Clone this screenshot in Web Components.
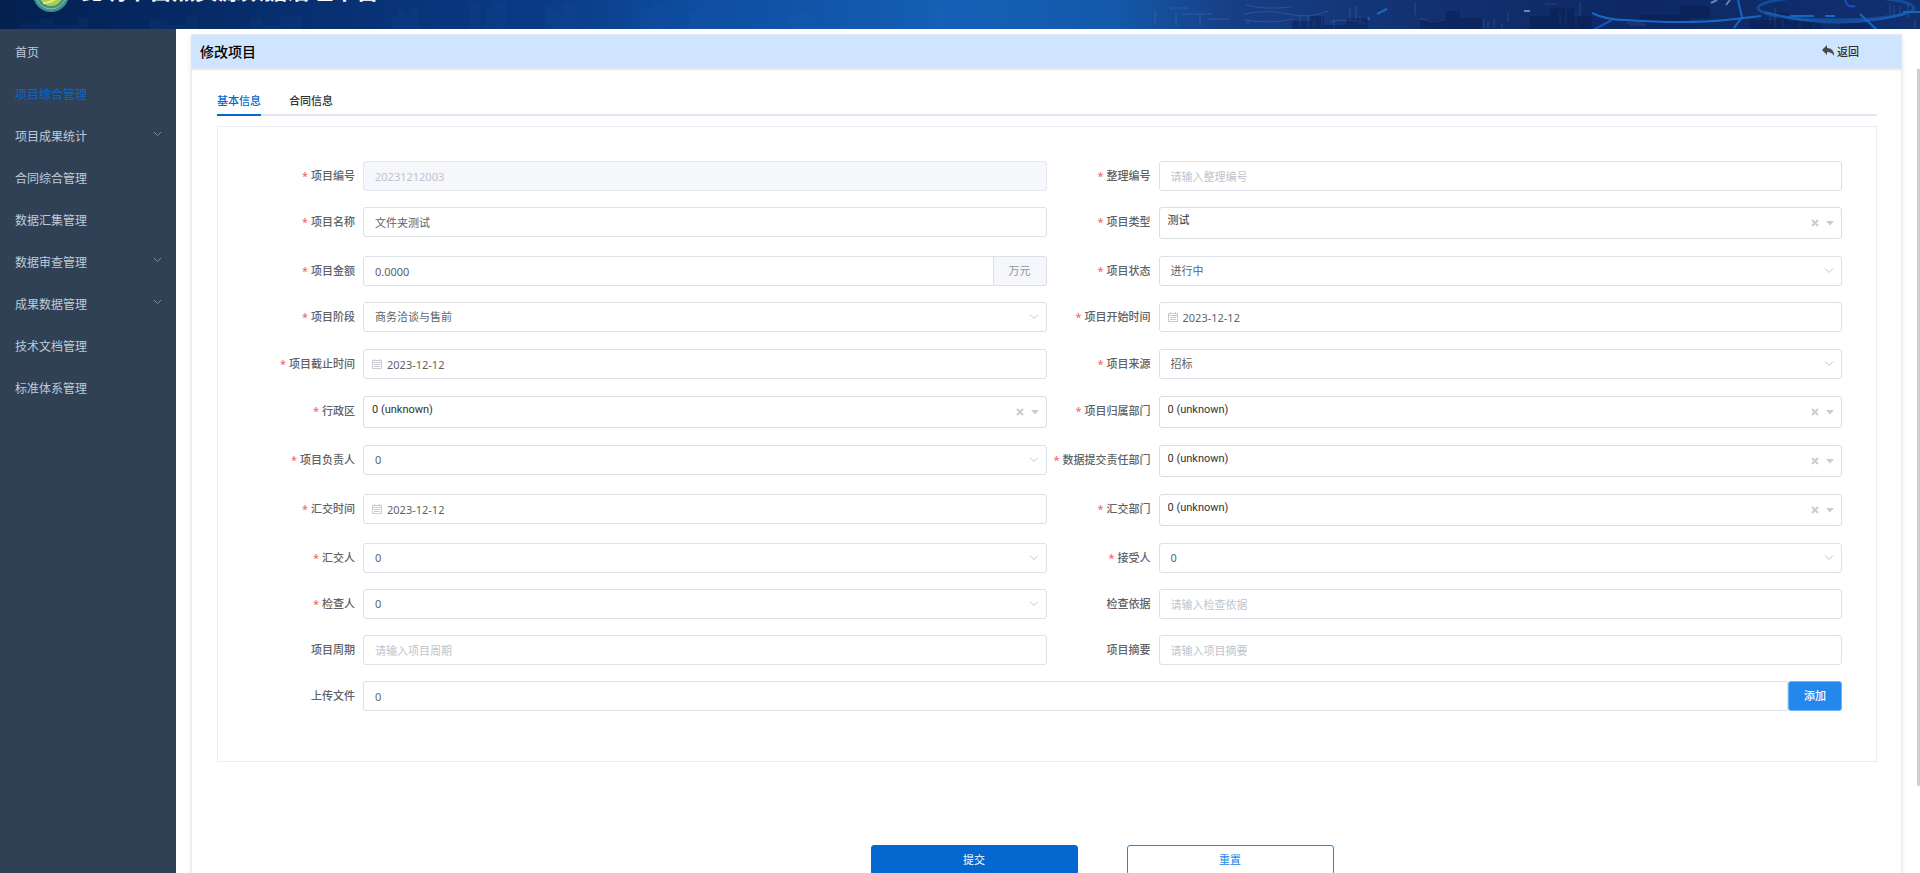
<!DOCTYPE html>
<html lang="zh-CN">
<head>
<meta charset="utf-8">
<meta name="viewport" content="width=device-width, initial-scale=1">
<title>修改项目</title>
<style>
  html, body { margin: 0; height: 100%; overflow: hidden; background: #fff; }
  body { font: 11px/16px "Noto Sans", "Noto Sans CJK SC", sans-serif; color: #303133; }
</style>
</head>
<body>
<app-shell>
  <app-banner slot="banner">昆明市自然资源数据治理平台</app-banner>
  <side-menu slot="menu">
    <menu-item>首页</menu-item>
    <menu-item active>项目综合管理</menu-item>
    <menu-item expandable>项目成果统计</menu-item>
    <menu-item>合同综合管理</menu-item>
    <menu-item>数据汇集管理</menu-item>
    <menu-item expandable>数据审查管理</menu-item>
    <menu-item expandable>成果数据管理</menu-item>
    <menu-item>技术文档管理</menu-item>
    <menu-item>标准体系管理</menu-item>
  </side-menu>
  <page-card heading="修改项目">
    <tab-bar tabs="基本信息,合同信息"></tab-bar>
    <form-panel>
      <form-field label="项目编号" required kind="text" value="20231212003" disabled></form-field>
      <form-field label="整理编号" required kind="text" placeholder="请输入整理编号"></form-field>
      <form-field label="项目名称" required kind="text" value="文件夹测试"></form-field>
      <form-field label="项目类型" required kind="tree" value="测试"></form-field>
      <form-field label="项目金额" required kind="text" value="0.0000" unit="万元"></form-field>
      <form-field label="项目状态" required kind="select" value="进行中"></form-field>
      <form-field label="项目阶段" required kind="select" value="商务洽谈与售前"></form-field>
      <form-field label="项目开始时间" required kind="date" value="2023-12-12"></form-field>
      <form-field label="项目截止时间" required kind="date" value="2023-12-12"></form-field>
      <form-field label="项目来源" required kind="select" value="招标"></form-field>
      <form-field label="行政区" required kind="tree" value="0 (unknown)"></form-field>
      <form-field label="项目归属部门" required kind="tree" value="0 (unknown)"></form-field>
      <form-field label="项目负责人" required kind="select" value="0"></form-field>
      <form-field label="数据提交责任部门" required kind="tree" value="0 (unknown)"></form-field>
      <form-field label="汇交时间" required kind="date" value="2023-12-12"></form-field>
      <form-field label="汇交部门" required kind="tree" value="0 (unknown)"></form-field>
      <form-field label="汇交人" required kind="select" value="0"></form-field>
      <form-field label="接受人" required kind="select" value="0"></form-field>
      <form-field label="检查人" required kind="select" value="0"></form-field>
      <form-field label="检查依据" kind="text" placeholder="请输入检查依据"></form-field>
      <form-field label="项目周期" kind="text" placeholder="请输入项目周期"></form-field>
      <form-field label="项目摘要" kind="text" placeholder="请输入项目摘要"></form-field>
      <form-field label="上传文件" kind="text" value="0" action="添加" wide></form-field>
    </form-panel>
    <form-actions></form-actions>
  </page-card>
</app-shell>

<script>
const define = (name, markup, setup) => {
  const template = document.createElement('template');
  template.innerHTML = markup;
  customElements.define(name, class extends HTMLElement {
    constructor() {
      super();
      this.attachShadow({ mode: 'open' }).append(template.content.cloneNode(true));
    }
    connectedCallback() {
      if (setup && !this.ready) { this.ready = true; setup(this, this.shadowRoot); }
    }
  });
};

define('app-shell', `
  <style>
    :host { display: flex; flex-direction: column; height: 100vh; overflow: hidden; }
    .body { position: relative; display: flex; flex: 1; min-height: 0; }
    main { flex: 1; min-width: 0; padding: 5px 18px 0 15px; overflow: hidden; }
    .thumb { position: absolute; right: 0; top: 40px; width: 3px; height: 85%; background: #cfcfcf; border-radius: 0 0 2px 2px; }
  </style>
  <slot name="banner"></slot>
  <div class="body">
    <slot name="menu"></slot>
    <main><slot></slot></main>
    <div class="thumb"></div>
  </div>`);

define('app-banner', `
  <style>
    :host { position: relative; display: flex; align-items: flex-end; flex: none; height: 29px; overflow: hidden;
      background: linear-gradient(90deg, #03204f 0, #062a66 10%, #0a3a85 28%, #0e4d9f 36%, #1560b6 50%, #1459aa 58%, #173f86 64%, #12306f 75%, #0d2864 85%, #11306f 100%); }
    .art { position: absolute; inset: 0; width: 100%; height: 100%; }
    .logo { position: relative; flex: none; width: 38px; height: 38px; margin: 0 0 16px 32px; }
    h1 { position: relative; margin: 0 0 23px 10px; font-size: 23px; line-height: 32px; font-weight: 700; color: #fff; white-space: nowrap; }
  </style>
  <svg class="art" viewBox="0 0 1920 29" preserveAspectRatio="none" aria-hidden="true">
    <g fill="#2a6bc0" opacity=".07">
      <path d="M392 29V16h6v-5h5v4h8V9h7v20zM470 29V3h10v26zM486 29V8h8V2h12v27zM545 29V6h10v7h8V3h13v26zM640 29V8h14v-4h12v25zM690 29V12h12V6h16v23zM790 29V16h10v-4h14v17zM930 29V8h8V3h6v26z"/>
      <path d="M20 29v-6h20v-4h14v6h24v-8h10v12zM150 29v-9h16v5h20v-8h12v12zM250 29V18h12v7h18v-9h22v13z"/>
    </g>
    <g fill="none" stroke="#8db6e8" stroke-width="1" opacity=".2">
      <path d="M1170 8h18m-6 6h30m-4 5h22M1246 5q20 5 45 2M1244 14q22-5 44 0t40-3M1244 20q26 4 50-1M1330 22q16-5 36 2M1420 18q12 6 24 2M1155 10v14M1176 12v14M1200 14v12M1248 21v3"/>
      <path d="M1300 15v12m8-12v14m6-10v8m8-12v12m12-8v10M1350 8v12m6-14v16m4-6v9M1415 3v12M1484 19v8m4-6v7m6-9v9m8-4v5M1508 13v9M1560 12v12m6-16v18m10-12v13m4-25v14M1545 4h12M1626 23h18M1630 25h16M1770 12v12m5-16v19m8-7v8M1800 20v8m14-4v4M1890 3v12m4-10v13M1900 6v8M1908 3v15M1915 20v8"/>
    </g>
    <g fill="#061844" opacity=".35">
      <path d="M1292 29v-8h18v-5h14v9h22v-7h22v11zM1420 29v-9h26v-9h14v7h22v11zM1530 29V16h20V8h24v8h18v13zM1640 15h40v-9h30v12h-20v5h-50zM1750 29v-9h28v-8h10v9h34v8zM1840 29v-6h30v6z"/>
    </g>
    <g fill="none" stroke="#1768c0" stroke-width="2">
      <path d="M1592 13q14 7 34 7 60 4 100 0l35-4M1738 0l4 17-8 11M1377 14l10-5M1368 17l1 3" />
      <path d="M1612 20l-19 10M1845 0q2 8 10 6" stroke="#1a4fbe"/>
      <path d="M1790 16h24m11 0h10M1860 14l17 16M1903 12h17"/>
      <ellipse cx="1836" cy="8" rx="78" ry="12" stroke="#1560b8" stroke-width="3" opacity=".6"/>
      <path d="M1765 12q70 20 140 2" stroke="#236fd0" opacity=".5"/>
    </g>
    <g fill="none" stroke="#c5dcf8" stroke-width="2" opacity=".5"><path d="M1711 3l6-3M1726 5l4-5M1524 11h6"/></g>
  </svg>
  <svg class="logo" viewBox="0 0 38 38" aria-hidden="true">
    <circle cx="19" cy="19" r="18" fill="#3f8f8d"/>
    <circle cx="19" cy="19" r="15" fill="none" stroke="#8cc6a8" stroke-width="1"/>
    <circle cx="19" cy="19" r="12" fill="#a9cf4d"/>
    <path d="M8 24q8 1 12-5t10-7M11 28q10 0 18-9" fill="none" stroke="#e6ee7b" stroke-width="2"/>
    <path d="M8 15q10 4 20-6" fill="none" stroke="#4ba05a" stroke-width="2"/>
  </svg>
  <h1><slot></slot></h1>`);

define('side-menu', `
  <style>
    :host { display: block; flex: none; width: 176px; background: #304156; }
    nav { display: flex; flex-direction: column; padding-top: 3px; }
  </style>
  <nav><slot></slot></nav>`);

define('menu-item', `
  <style>
    :host { display: block; --ink: #bfcbd9; }
    :host([active]) { --ink: #0468d0; }
    a { display: flex; align-items: center; justify-content: space-between; height: 42px; padding: 0 14px 0 15px; font-size: 12px; color: var(--ink); text-decoration: none; }
    svg { display: none; width: 9px; height: 12px; margin-bottom: 6px; }
    :host([expandable]) svg { display: block; }
  </style>
  <a href="#"><span><slot></slot></span>
    <svg viewBox="0 0 9 12" fill="none" stroke="#7f8b99" aria-hidden="true"><path d="M1 4l3.500 3.500L8 4"/></svg>
  </a>`);

define('page-card', `
  <style>
    :host { display: block; min-height: 100%; box-sizing: border-box; border: 1px solid #e6ebf5; background: #fff; box-shadow: 0 2px 5px rgba(0,0,0,.1); }
    header { display: flex; align-items: center; justify-content: space-between; height: 33px; padding: 0 42px 0 8px; background: #cfe4ff; border-bottom: 1px solid #e0e2e6; box-shadow: 0 1px 2px rgba(0,0,0,.1); }
    h2 { margin: 0; font-size: 14px; line-height: 20px; font-weight: 500; color: #000; }
    button { display: flex; align-items: center; gap: 3px; padding: 0; border: 0; background: none; font: inherit; font-weight: 500; color: #303133; }
    button svg { margin-bottom: 2px; }
    .content { padding: 23px 24px 0 25px; }
  </style>
  <header>
    <h2></h2>
    <button type="button">
      <svg width="12" height="12" viewBox="0 0 12 12" fill="#4a4a4a" aria-hidden="true"><path d="M5 0v3q7 0 7 8-2-4-7-4v3L0 5z"/></svg>返回
    </button>
  </header>
  <div class="content"><slot></slot></div>`,
  (host, root) => { root.querySelector('h2').textContent = host.getAttribute('heading'); });

define('tab-bar', `
  <style>
    :host { display: block; }
    nav { display: flex; gap: 28px; box-shadow: inset 0 -2px #e4e7ed; }
    a { height: 22px; border-bottom: 2px solid transparent; font-weight: 500; line-height: 18px; color: #303133; text-decoration: none; }
    a:first-child { color: #0468d0; border-color: #0468d0; }
  </style>
  <nav></nav>`,
  (host, root) => {
    for (const name of host.getAttribute('tabs').split(',')) {
      const link = document.createElement('a');
      link.href = '#';
      link.textContent = name;
      root.querySelector('nav').append(link);
    }
  });

define('form-panel', `
  <style>
    :host { display: block; margin-top: 10px; padding: 34px 34px 50px 33px; border: 1px solid #ebeef5; }
    .grid { display: grid; grid-template-columns: minmax(0, 1fr) minmax(0, 1fr); row-gap: 16px; }
    ::slotted([wide]) { grid-column: 1 / -1; }
  </style>
  <div class="grid"><slot></slot></div>`);

const fieldStyle = `
  <style>
    :host { display: flex; align-items: flex-start; }
    :host([kind="tree"]), :host([kind="date"]) { padding-bottom: 1px; }
    * { box-sizing: border-box; }
    label { flex: none; width: 112px; padding-right: 8px; line-height: 30px; text-align: right; font-weight: 500; color: #606266; white-space: nowrap; }
    :host([required]) label::before { content: "*"; margin-right: 3px; color: #f56c6c; }
    .box { position: relative; display: flex; flex: 1; min-width: 0; }
    input, select { flex: 1; width: 100%; min-width: 0; height: 30px; margin: 0; padding: 0 11px; border: 1px solid #dcdfe6; border-radius: 3px; outline: 0; background: #fff; font: inherit; color: #606266; appearance: none; }
    input::placeholder { color: #c0c4cc; opacity: 1; }
    input:disabled { background: #f5f7fa; border-color: #e4e7ed; color: #c0c4cc; }
    .date input { padding-left: 23px; }
    .tree select { height: 32px; padding: 0 40px 4px 8px; border-color: #ddd; font-family: Roboto, "Noto Sans CJK SC", sans-serif; color: #333; }
    svg { position: absolute; top: 9px; width: 12px; height: 12px; pointer-events: none; }
    .caret { right: 6px; }
    .clear { right: 21px; }
    .arrow { right: 7px; }
    .tree svg { top: 10px; }
    .calendar { left: 8px; }
    .unit { flex: none; width: 53px; border: 1px solid #dcdfe6; border-left: 0; border-radius: 0 3px 3px 0; background: #f5f7fa; line-height: 28px; text-align: center; color: #909399; }
    .joined input { border-radius: 3px 0 0 3px; }
    button { flex: none; width: 54px; height: 30px; padding: 0; border: 1px solid #6bb4f5; border-radius: 3px; background: #2487ec; font: inherit; font-weight: 500; color: #fff; }
  </style>`;

const icons = {
  arrow: '<svg class="arrow" viewBox="0 0 12 12" fill="none" stroke="#c0c4cc" aria-hidden="true"><path d="M2 3.500l4 4 4-4"/></svg>',
  clear: '<svg class="clear" viewBox="0 0 12 12" fill="none" stroke="#ccc" stroke-width="2" aria-hidden="true"><path d="M3 3l6 6m0-6l-6 6"/></svg>',
  caret: '<svg class="caret" viewBox="0 0 12 12" fill="#ccc" aria-hidden="true"><path d="M2 4h8L6 8.500z"/></svg>',
  calendar: '<svg class="calendar" viewBox="0 0 12 12" fill="none" stroke="#c8cbd2" aria-hidden="true"><path d="M1.500 2.500h9v8h-9zM1.500 4.500h9M3.500 1v2M8.500 1v2M3 6.500h6M3 8.500h6"/></svg>'
};

define('form-field', fieldStyle + `<label for="control"></label><div class="box"></div>`,
  (host, root) => {
    const kind = host.getAttribute('kind');
    const value = host.getAttribute('value') || '';
    const box = root.querySelector('.box');
    root.querySelector('label').textContent = host.getAttribute('label');
    box.classList.add(kind);
    if (kind === 'select' || kind === 'tree') {
      box.innerHTML = '<select id="control"><option></option></select>' + (kind === 'tree' ? icons.clear + icons.caret : icons.arrow);
      box.querySelector('option').textContent = value;
      return;
    }
    box.innerHTML = '<input id="control" type="text">' + (kind === 'date' ? icons.calendar : '');
    const input = box.querySelector('input');
    input.value = value;
    input.placeholder = host.getAttribute('placeholder') || '';
    input.disabled = host.hasAttribute('disabled');
    const hasUnit = host.hasAttribute('unit');
    if (hasUnit || host.hasAttribute('action')) {
      const part = document.createElement(hasUnit ? 'span' : 'button');
      if (hasUnit) part.className = 'unit';
      part.textContent = host.getAttribute(hasUnit ? 'unit' : 'action');
      box.classList.add('joined');
      box.append(part);
    }
  });

define('form-actions', `
  <style>
    :host { display: flex; justify-content: center; gap: 49px; margin-top: 83px; padding: 0 0 24px 110px; }
    button { width: 207px; height: 30px; padding: 0; border: 1px solid #0468d0; border-radius: 3px; background: #0468d0; font: inherit; color: #fff; }
    .reset { border-color: #1a88e8; background: #fff; color: #1a88e8; }
  </style>
  <button type="submit">提交</button>
  <button type="reset" class="reset">重置</button>`);
</script>
</body>
</html>
